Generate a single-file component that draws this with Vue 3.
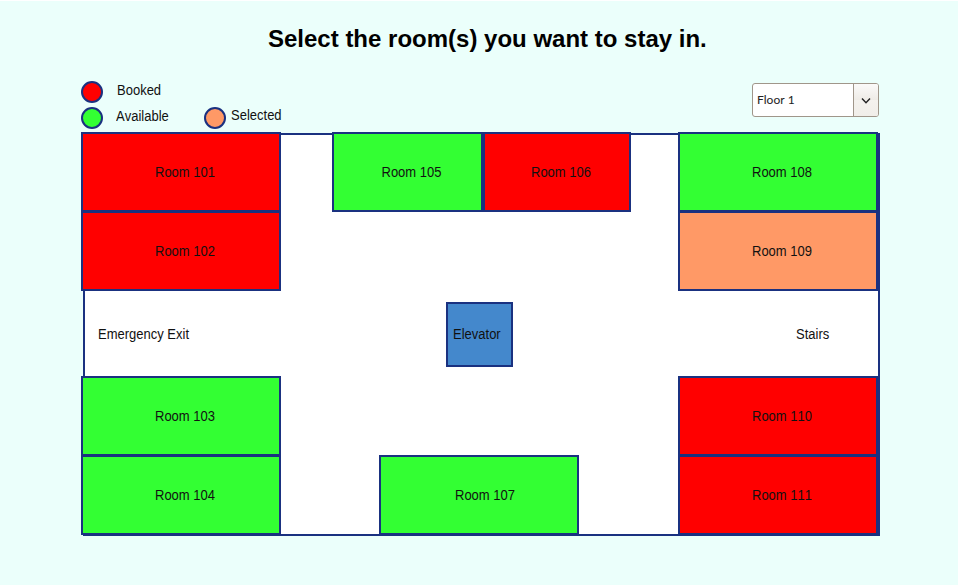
<script setup>
import { ref } from 'vue'

const floor = ref('Floor 1')

// Positions are relative to the floor plan canvas.
const rooms = ref([
  { id: 101, status: 'booked', x: 0, y: 0, w: 200 },
  { id: 102, status: 'booked', x: 0, y: 79, w: 200 },
  { id: 103, status: 'available', x: 0, y: 244, w: 200 },
  { id: 104, status: 'available', x: 0, y: 323, w: 200 },
  { id: 105, status: 'available', x: 251, y: 0, w: 151 },
  { id: 106, status: 'booked', x: 402, y: 0, w: 148 },
  { id: 107, status: 'available', x: 298, y: 323, w: 200 },
  { id: 108, status: 'available', x: 597, y: 0, w: 200 },
  { id: 109, status: 'selected', x: 597, y: 79, w: 200 },
  { id: 110, status: 'booked', x: 597, y: 244, w: 200 },
  { id: 111, status: 'booked', x: 597, y: 323, w: 200 },
])

function toggle(room) {
  if (room.status === 'available') room.status = 'selected'
  else if (room.status === 'selected') room.status = 'available'
}
</script>

<template>
  <main class="page">
    <h1 class="title">Select the room(s) you want to stay in.</h1>
    <header class="toolbar">
      <div class="legend">
        <div class="key"><span class="dot booked"></span><span class="label">Booked</span></div>
        <div class="key-row">
          <div class="key second"><span class="dot available"></span><span class="label">Available</span></div>
          <div class="key third"><span class="dot selected"></span><span class="label">Selected</span></div>
        </div>
      </div>
      <div class="select">
        <span class="value">{{ floor }}</span>
        <span class="arrow">
          <svg width="10" height="8" viewBox="0 0 10 8"><path d="M1 1.5 L5 5.8 L9 1.5" fill="none" stroke="#222" stroke-width="1.4" /></svg>
        </span>
      </div>
    </header>
    <section class="plan">
      <div class="walls"></div>
      <div
        v-for="room in rooms"
        :key="room.id"
        class="room"
        :class="room.status"
        :style="{ left: room.x + 'px', top: room.y + 'px', width: room.w + 'px' }"
        @click="toggle(room)"
      >
        <span class="name" :class="{ wide: room.id === 107 }">Room {{ room.id }}</span>
      </div>
      <span class="place exit">Emergency Exit</span>
      <div class="elevator"><span class="tall">Elevator</span></div>
      <span class="place stairs">Stairs</span>
    </section>
  </main>
</template>

<style>
body {
  background: #fff;
}
</style>

<style scoped>
.page {
  box-sizing: border-box;
  width: 958px;
  height: 585px;
  border-top: 1px solid #fff;
  padding: 22px 78px 0 81px;
  background: #ebfffb;
  color: #111;
  font: 13px/16px "Liberation Sans", Arial, sans-serif;
  font-kerning: none;
}
.title {
  margin: 0 0 0 187px;
  color: #000;
  font-size: 24px;
  line-height: 32px;
  font-weight: bold;
  white-space: nowrap;
}
.toolbar {
  display: flex;
  justify-content: space-between;
  align-items: flex-start;
  height: 51px;
  padding: 26px 1px 0 0;
}
.key-row,
.key {
  display: flex;
  align-items: flex-start;
}
.key-row {
  margin-top: 4px;
}
.dot {
  box-sizing: border-box;
  width: 22px;
  height: 22px;
  border: 2px solid #1a3180;
  border-radius: 50%;
}
.label,
.name,
.place,
.tall {
  display: inline-block;
  transform: scaleY(1.06);
}
.label {
  margin: 2px 0 0 14px;
}
.second .label {
  width: 88px;
  margin-left: 13px;
}
.third .label {
  margin: 1px 0 0 5px;
}
.booked {
  background: #f00;
}
.available {
  background: #3f3;
}
.selected {
  background: #f96;
}
.select {
  box-sizing: border-box;
  display: flex;
  width: 127px;
  height: 34px;
  margin-top: 2px;
  border: 1px solid #a0968a;
  border-radius: 3px;
  overflow: hidden;
  background: #fff;
  color: #222;
  font-family: Lato, sans-serif;
  font-size: 12px;
  line-height: 32px;
}
.value {
  flex: 1;
  padding-left: 4px;
}
.arrow {
  display: flex;
  align-items: center;
  justify-content: center;
  width: 24px;
  padding-top: 2px;
  border-left: 1px solid #a0968a;
  background: linear-gradient(#fbfaf9, #eeebe6 50%, #f4f2ee 51%, #f1eee9);
}
.plan {
  position: relative;
  width: 799px;
  height: 404px;
}
.walls {
  position: absolute;
  box-sizing: border-box;
  inset: 1px 0 0 2px;
  border: 2px solid #1a3180;
  background: #fff;
}
.room {
  position: absolute;
  box-sizing: border-box;
  display: flex;
  align-items: center;
  justify-content: center;
  height: 80px;
  border: 2px solid #1a3180;
}
.name {
  padding: 1px 0 0 8px;
}
.name.wide {
  padding-left: 12px;
}
.place {
  position: absolute;
  top: 195px;
}
.exit {
  left: 17px;
}
.stairs {
  left: 715px;
}
.elevator {
  position: absolute;
  left: 365px;
  top: 170px;
  box-sizing: border-box;
  width: 67px;
  height: 65px;
  padding-left: 5px;
  border: 2px solid #1a3180;
  background: #4488cc;
  line-height: 61px;
}
</style>
